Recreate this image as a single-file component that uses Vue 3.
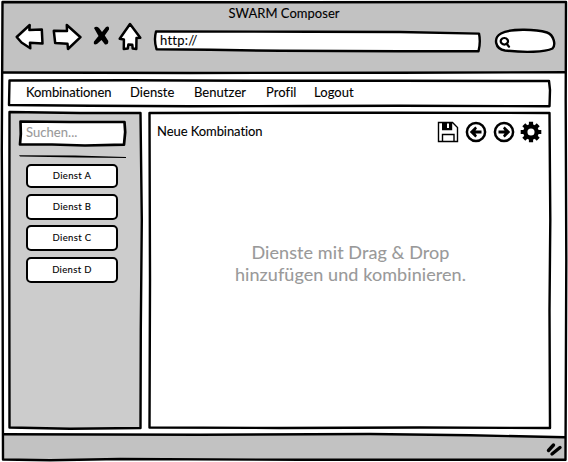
<script setup>
const menu = [
  { label: 'Kombinationen', width: 104 },
  { label: 'Dienste', width: 64 },
  { label: 'Benutzer', width: 72 },
  { label: 'Profil', width: 48 },
  { label: 'Logout', width: 50 },
]
const services = [
  { name: 'Dienst A', height: 24 },
  { name: 'Dienst B', height: 26 },
  { name: 'Dienst C', height: 26 },
  { name: 'Dienst D', height: 26 },
]
</script>

<template>
  <div class="window">
    <header class="chrome">
      <div class="title">SWARM Composer</div>
      <div class="toolbar">
        <svg class="controls" width="128" height="32" viewBox="15 21 128 32">
          <g class="shape">
            <path d="M16.7 37 L29.7 25 L29.4 30 L41.8 29.4 L42.5 43.5 L30 42.7 L30.3 48.2 L21.5 42.5 Z" />
            <path d="M53.8 30.8 L67 31 L66.8 25 L80.5 37.2 L68 49 L67.5 43.8 L55.2 43 Z" />
            <path d="M130 24 L140.3 37.8 L136.5 38 L136.3 49 L132.7 48.5 L132.3 44.8 L128.4 44.5 L127.8 48.5 L123.8 49 L123.9 39.5 L119.7 38.7 Z" />
          </g>
          <path class="cross" d="M94 28 Q96 25.5 99 28 L102 32 L106 27 Q109.5 25.5 109 29.5 L104.8 35.5 L108.3 41 Q108.5 45 105 44.5 L101.5 40 L97 44 Q93 45.5 94 41.5 L98.5 36 Z" />
        </svg>
        <div class="address">
          <svg class="sketch" viewBox="153 29 329 25">
            <path class="paper" d="M156 31.5 L310 31.7 L400 32 L479 33.6 Q480.8 42 478.5 51.3 L400 51.2 L280 50.8 L210 49.8 L156.5 49.2 Q153.7 40 156 31.5 Z" />
          </svg>
          <span class="url">http://</span>
        </div>
        <svg class="lookup" width="62" height="26" viewBox="494 28 62 26">
          <path class="paper" d="M505 50.5 C495 49 493 38 501 33.5 C510 28.5 535 28.8 547 32.5 C554 35 556 45 552.5 48.5 C545 52.2 525 52.8 505 50.5 Z" />
          <path class="lens" d="M504.3 38 a3.6 3.3 0 1 0 .1 0 M506.5 43.5 L509 46.7" />
        </svg>
      </div>
    </header>

    <div class="page">
      <nav class="menu">
        <svg class="sketch" viewBox="8 78 544 30">
          <path class="line" d="M9.5 80.5 L130 80.3 L250 80.8 L400 80.8 L549 81 L550 90 L549.5 106.3 L400 105.8 L310 106 L190 106.3 L90 105.7 L9 105 Z" />
        </svg>
        <span v-for="m in menu" :key="m.label" :style="{ width: m.width + 'px' }">{{ m.label }}</span>
      </nav>

      <div class="columns">
        <aside class="sidebar">
          <svg class="sketch" viewBox="8 110 135 320">
            <path class="panel" d="M9.5 112 L80 113 L140.5 113 L141.8 220 L140.8 330 L140.5 428 L70 428.7 L9.5 427.5 L9.3 270 Z" />
          </svg>
          <div class="search">
            <svg class="sketch" viewBox="18 119 108 28">
              <path class="thick" d="M20.5 121.5 L70 122 L124.5 122 L125.2 132 L124 144.7 L85 145.5 L52 144.5 L20 144.5 L20.8 134 Z" />
            </svg>
            <span>Suchen...</span>
          </div>
          <svg class="divider" width="107" height="4" viewBox="0 0 107 4">
            <path d="M0 .2 L56 .5 L107 2 V3 L60 2.6 L1 1.6 Z" />
          </svg>
          <ul class="services">
            <li v-for="s in services" :key="s.name" :style="{ height: s.height + 'px' }">{{ s.name }}</li>
          </ul>
        </aside>

        <main class="canvas">
          <svg class="sketch" viewBox="148 110 404 320">
            <path class="line" d="M149.5 113 L250 112.7 L400 112.7 L549.5 113 L550.3 220 L549.5 310 L550 428 L420 427.5 L280 428 L149.5 427.5 L150 280 Z" />
          </svg>
          <div class="bar">
            <h1>Neue Kombination</h1>
            <div class="actions">
              <svg width="22" height="22" viewBox="0 0 22 22">
                <path class="thin" d="M1.5 1.5 H15.5 L20.5 6.5 V20.5 H1.5 Z M5.5 20 V13.5 H17 V20 M14.5 2 V8.5 H5" />
                <path d="M5 1 H14 V8 H5 Z" /><path class="white" d="M10 2.5 H12 V7 H10 Z" />
              </svg>
              <svg width="22" height="22" viewBox="0 0 22 22">
                <circle class="ring" cx="11" cy="11" r="9.1" />
                <path d="M4.8 11 L10.3 5.6 L12 7.3 L10.5 9.4 H16.5 V12.6 H10.5 L12 14.7 L10.3 16.4 Z" />
              </svg>
              <svg width="22" height="22" viewBox="0 0 22 22">
                <circle class="ring" cx="11" cy="11" r="9.1" />
                <path d="M17.2 11 L11.7 5.6 L10 7.3 L11.5 9.4 H5.5 V12.6 H11.5 L10 14.7 L11.7 16.4 Z" />
              </svg>
              <svg width="20" height="22" viewBox="1 0 20 22">
                <circle class="cog" cx="11" cy="11" r="5.7" />
                <path class="teeth" d="M11 .7 V5 M11 17 V21.3 M.7 11 H5 M17 11 H21.3 M3.8 3.8 L6.5 6.5 M15.5 15.5 L18.2 18.2 M3.8 18.2 L6.5 15.5 M15.5 6.5 L18.2 3.8" />
              </svg>
            </div>
          </div>
          <p class="hint"><span>Dienste mit Drag &amp; Drop</span><span>hinzufügen und kombinieren.</span></p>
        </main>
      </div>
    </div>

    <svg class="outline" viewBox="0 0 568 462">
      <path class="edge" d="M0 0 H568 V462 H0 Z M3 2 V459.5 L200 459 L566 459.8 L566.3 2 Z" />
      <path class="footer-fill" d="M3 434 L300 434 L420 434.5 L565 437 V459 H3 Z" />
      <path class="line" d="M2.5 2 L300 2.3 L566 2 L565.7 100 L566.3 260 L565.5 459.8 L300 459.8 L120 459 L50 460.3 L3 459.5 L2.6 300 L1.8 150 Z" />
      <path class="line" d="M3 72.5 L190 73 L400 72.7 L565 72.2 M3 434.2 L200 434.7 L370 434 L470 435.3 L565 437.2" />
      <path class="grip-line" d="M548.5 450.5 L553.5 445 M552 454 L560 447.5" />
    </svg>
  </div>
</template>

<style>
body { margin: 0; background: #fff; }
</style>

<style scoped>
* { box-sizing: border-box; }
.window { position: relative; width: 568px; height: 462px; display: flex; flex-direction: column; overflow: hidden; background: #fff; color: #000; font-family: Lato, "Open Sans", sans-serif; font-size: 13px; font-variant-ligatures: none; -webkit-text-stroke: .1px currentColor; }
svg { display: block; overflow: visible; }
.sketch { position: absolute; inset: 0; width: 100%; height: 100%; z-index: 0; }
.outline { position: absolute; inset: 0; width: 568px; height: 462px; pointer-events: none; }
.edge { fill: #fff; fill-rule: evenodd; }
.footer-fill { fill: #c2c2c2; }
.line { fill: none; stroke: #000; stroke-width: 2.4; stroke-linejoin: round; }
.panel { fill: #ccc; stroke: #000; stroke-width: 2.4; stroke-linejoin: round; }
.thick { fill: #fff; stroke: #000; stroke-width: 2.7; stroke-linejoin: round; }
.paper { fill: #fff; stroke: #000; stroke-width: 2.4; stroke-linejoin: round; }
.grip-line { fill: none; stroke: #000; stroke-width: 3.4; stroke-linecap: round; }
.chrome { height: 73px; background: #c2c2c2; padding-top: 5px; }
.title { height: 16px; line-height: 16px; text-align: center; letter-spacing: .03px; }
.toolbar { display: flex; padding-left: 15px; }
.controls { flex: none; }
.shape path { fill: #fff; stroke: #000; stroke-width: 2.5; stroke-linejoin: round; }
.cross { fill: #000; }
.address { position: relative; width: 329px; height: 25px; margin: 8px 0 0 10px; padding: 3px 0 0 7px; line-height: 16px; }
.url { position: relative; letter-spacing: .25px; }
.lookup { margin: 7px 0 0 12px; }
.lens { fill: none; stroke: #000; stroke-width: 2.2; stroke-linecap: round; }
.page { height: 361px; padding: 5px 16px 0 8px; }
.menu { position: relative; height: 30px; display: flex; padding: 6px 0 0 18px; line-height: 17px; letter-spacing: .05px; white-space: nowrap; }
.menu span { position: relative; }
.menu span:nth-of-type(1) { letter-spacing: -.1px; }
.columns { display: flex; gap: 5px; margin-top: 2px; height: 320px; }
.sidebar { position: relative; width: 135px; padding: 9px 0 0 10px; }
.search { position: relative; width: 108px; height: 28px; padding: 5px 0 0 8px; line-height: 17px; color: #999; }
.search span { position: relative; letter-spacing: .05px; }
.divider { position: relative; margin: 8px 0 0 1px; }
.services { position: relative; list-style: none; margin: 5px 0 0 8px; padding: 0; width: 92px; display: flex; flex-direction: column; gap: 5.6px; }
.services li { display: flex; align-items: center; justify-content: center; padding-bottom: 1px; background: #fff; border: 2px solid #000; border-radius: 5px; font-size: 9.5px; letter-spacing: .35px; }
.canvas { position: relative; width: 404px; padding: 11px 11px 0 9px; }
.bar { position: relative; display: flex; justify-content: space-between; height: 22px; }
h1 { margin: 0; font-size: 13px; font-weight: 400; line-height: 21px; letter-spacing: -.07px; }
.actions { display: flex; gap: 6px; }
.thin { fill: none; stroke: #000; stroke-width: 1.4; }
.white { fill: #fff; }
.ring { fill: none; stroke: #000; stroke-width: 2.5; }
.cog { fill: none; stroke: #000; stroke-width: 4.3; }
.teeth { fill: none; stroke: #000; stroke-width: 4.2; }
.hint { position: relative; display: flex; flex-direction: column; align-items: center; margin: 98px -3px 0 0; color: #999; font-size: 18px; line-height: 22px; letter-spacing: .08px; white-space: nowrap; }
</style>
